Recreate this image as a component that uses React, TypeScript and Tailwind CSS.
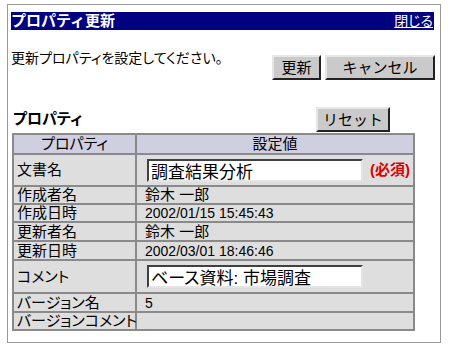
import React from 'react';

type Row = {
  label: string;
  value?: string;
  kind?: 'text' | 'mono' | 'input' | 'required';
  h: string;
};

const rows: Row[] = [
  { label: '文書名', value: '調査結果分析', kind: 'required', h: 'h-[32px]' },
  { label: '作成者名', value: '鈴木 一郎', kind: 'text', h: 'h-[18px]' },
  { label: '作成日時', value: '2002/01/15 15:45:43', kind: 'mono', h: 'h-[18px]' },
  { label: '更新者名', value: '鈴木 一郎', kind: 'text', h: 'h-[19px]' },
  { label: '更新日時', value: '2002/03/01 18:46:46', kind: 'mono', h: 'h-[19px]' },
  { label: 'コメント', value: 'ベース資料: 市場調査', kind: 'input', h: 'h-[33px]' },
  { label: 'バージョン名', value: '5', kind: 'mono', h: 'h-[19px]' },
  { label: 'バージョンコメント', h: 'h-[18px]' },
];

// classic raised grey button
const Btn = ({ label, w }: { label: string; w: string }) => (
  <button
    className={`${w} h-[25px] bg-[#cacaca] border-2 border-t-[#e6e6e6] border-l-[#e6e6e6] border-b-[#222] border-r-[#222] text-[15px] leading-[19px] text-black`}
  >
    {label}
  </button>
);

const TextBox = ({ value }: { value: string }) => (
  <input
    readOnly
    defaultValue={value}
    className="w-[216px] h-[23px] bg-white border-2 border-t-[#404040] border-l-[#404040] border-b-[#e4e4e4] border-r-[#e4e4e4] pl-[2px] text-[17px] leading-[19px] text-black outline-none"
  />
);

export default function App() {
  return (
    <div className="w-[452px] h-[348px] bg-white pt-[4px] pl-[7px] font-['Liberation_Sans','Noto_Sans_CJK_JP',sans-serif] text-black">
      <div className="w-[434px] h-[339px] border border-[#999] pt-[7px] pl-[3px]">
        {/* Title bar */}
        <div className="w-[423px] h-[18px] bg-[#000080] flex items-center justify-between text-white">
          <span className="text-[15px] font-bold leading-[18px]">プロパティ更新</span>
          <a href="#" className="text-[14px] leading-[18px] underline mr-[1px] [font-feature-settings:'palt']">
            閉じる
          </a>
        </div>

        {/* Message + actions */}
        <div className="flex items-start mt-[20px]">
          <p className="w-[261px] text-[14px] leading-[17px] [font-feature-settings:'palt']">
            更新プロパティを設定してください。
          </p>
          <div className="flex gap-[4px] mt-[5px]">
            <Btn label="更新" w="w-[49px]" />
            <Btn label="キャンセル" w="w-[110px]" />
          </div>
        </div>

        {/* Section header */}
        <div className="flex items-start mt-[27px] h-[25px]">
          <h2 className="w-[305px] pl-[2px] mt-[3px] text-[15px] font-bold leading-[17px] [font-feature-settings:'palt']">
            プロパティ
          </h2>
          <Btn label="リセット" w="w-[74px]" />
        </div>

        {/* Property table */}
        <table className="table-fixed ml-[1px] mt-[1px] w-[403px] border-collapse border-2 border-[#808080] text-[15px] [font-feature-settings:'palt']">
          <colgroup>
            <col className="w-[123px]" />
            <col />
          </colgroup>
          <thead>
            <tr className="h-[20px] bg-[#cfcfe1]">
              <th className="border-2 border-[#8a8a8a] font-normal leading-[16px] p-0">プロパティ</th>
              <th className="border-2 border-[#8a8a8a] font-normal leading-[16px] p-0">設定値</th>
            </tr>
          </thead>
          <tbody>
            {rows.map((r) => (
              <tr key={r.label} className={`${r.h} bg-[#dedede]`}>
                <td className="border-2 border-[#8a8a8a] pl-[3px] p-0 leading-[16px] whitespace-nowrap">{r.label}</td>
                <td className="border-2 border-[#8a8a8a] p-0 leading-[16px] whitespace-nowrap">
                  {r.kind === 'required' && (
                    <div className="flex items-center pl-[10px]">
                      <TextBox value={r.value!} />
                      <span className="ml-[7px] text-[15px] font-bold text-[#dd0000]">(必須)</span>
                    </div>
                  )}
                  {r.kind === 'input' && (
                    <div className="flex items-center pl-[10px]">
                      <TextBox value={r.value!} />
                    </div>
                  )}
                  {r.kind === 'text' && <span className="pl-[8px]">{r.value}</span>}
                  {r.kind === 'mono' && <span className="pl-[8px] text-[14px]">{r.value}</span>}
                </td>
              </tr>
            ))}
          </tbody>
        </table>
      </div>
    </div>
  );
}
